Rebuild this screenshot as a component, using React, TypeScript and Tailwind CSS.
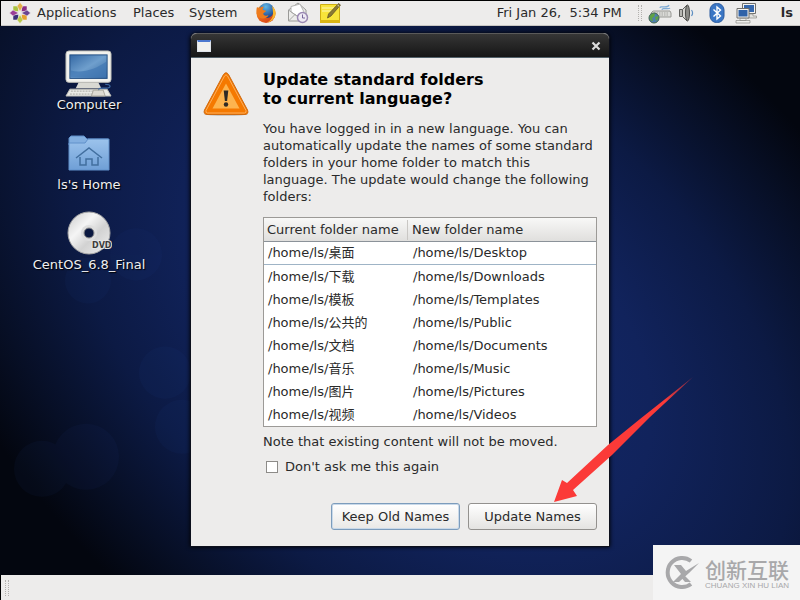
import type { ReactNode } from "react";

const folders = [
  ["/home/ls/桌面", "/home/ls/Desktop"],
  ["/home/ls/下载", "/home/ls/Downloads"],
  ["/home/ls/模板", "/home/ls/Templates"],
  ["/home/ls/公共的", "/home/ls/Public"],
  ["/home/ls/文档", "/home/ls/Documents"],
  ["/home/ls/音乐", "/home/ls/Music"],
  ["/home/ls/图片", "/home/ls/Pictures"],
  ["/home/ls/视频", "/home/ls/Videos"],
];

function CentosLogo() {
  return (
    <svg width="22" height="22" viewBox="0 0 22 22" aria-hidden="true">
      <g stroke="#f3f1ee" strokeWidth="0.5">
        <path d="M4 4h5.500v5.500H4z" fill="#a9c23f" />
        <path d="M12.500 4H18v5.500h-5.500z" fill="#8b2f86" />
        <path d="M4 12.500h5.500V18H4z" fill="#3b3079" />
        <path d="M12.500 12.500H18V18h-5.500z" fill="#e6a02e" />
        <path d="M11 0.500l3 3.500-3 5.500-3-5.500z" fill="#e3b04a" />
        <path d="M21.500 11l-3.500 3-5.500-3 5.500-3z" fill="#6b4592" />
        <path d="M11 21.500l3-3.500-3-5.500-3 5.500z" fill="#b9c94a" />
        <path d="M0.500 11l3.500-3 5.500 3-5.500 3z" fill="#9b3f97" />
      </g>
    </svg>
  );
}

function FirefoxIcon() {
  return (
    <svg width="22" height="22" viewBox="0 0 22 22" aria-hidden="true">
      <defs>
        <linearGradient id="fox" x1="0" y1="0" x2="1" y2="1">
          <stop offset="0" stopColor="#f7a21b" />
          <stop offset="0.500" stopColor="#e8601a" />
          <stop offset="1" stopColor="#c9341b" />
        </linearGradient>
        <radialGradient id="globe" cx="0.450" cy="0.250" r="0.800">
          <stop offset="0" stopColor="#5fb7e6" />
          <stop offset="1" stopColor="#173a86" />
        </radialGradient>
      </defs>
      <circle cx="11" cy="11.500" r="9.500" fill="url(#fox)" />
      <circle cx="11.500" cy="8.500" r="7.500" fill="url(#globe)" />
      <path d="M2 5c0 0 1.500 1 3 1 1-1 3-1.500 4-1-1.500 1-1.500 2-1 3l3 .7c0 1.500-2.500 1.800-2.800 3 .5 2 3 2.500 5.300 1.300-1 3-4.500 4.500-8 3C2 15 .5 10 2 5z" fill="#ee7b1c" />
      <path d="M17 4c3 2.500 4.300 6 3.500 9-1.200 4-4.500 7-8.500 7.500 4-2 6.300-5.500 6-9.500 0-2.500-.5-5-1-7z" fill="#f8b62d" />
    </svg>
  );
}

function MailIcon() {
  return (
    <svg width="22" height="22" viewBox="0 0 22 22" fill="none" aria-hidden="true">
      <path d="M1.500 8L11 1l8 7v11h-17.500z" fill="#ececea" stroke="#9a9a98" />
      <path d="M4 4.500l9-2.500 4 8-7 4-6-4z" fill="#fff" stroke="#b5b5b3" />
      <path d="M1.500 19l7-7M1.500 8l8.500 6" stroke="#a6a6a4" />
      <circle cx="15.500" cy="15.500" r="5" fill="#eeeaf3" stroke="#9a89b3" strokeWidth="1.500" />
      <path d="M15.500 12.500v3.500h2.500" stroke="#77679a" />
    </svg>
  );
}

function NoteIcon() {
  return (
    <svg width="23" height="22" viewBox="0 0 23 22" aria-hidden="true">
      <path d="M1.500 2.500h19v16h-19z" fill="#f8e43a" stroke="#cfae12" />
      <path d="M1 18h20v3H1z" fill="#d9b414" />
      <path d="M3 6h12M3 9h10" stroke="#fbf08a" strokeWidth="1.500" />
      <path d="M19.500 1.500l2 1.500-9.500 11-3.500 2 1-4z" fill="#8b7a35" stroke="#5c4d22" strokeWidth="0.700" />
      <path d="M18.500 3l1.800 1.400" stroke="#e5dfc8" />
    </svg>
  );
}

function KeyboardIcon() {
  return (
    <svg width="24" height="22" viewBox="0 0 24 22" fill="none" aria-hidden="true">
      <path d="M12 6c0-3 8 1 9-3" stroke="#7fabd4" strokeWidth="1.200" />
      <path d="M14 8c0-3 7 0 8-2" stroke="#7fabd4" strokeWidth="1.200" />
      <path d="M5 9h17l1 2v4H3v-4z" fill="#dcdcd9" stroke="#989894" />
      <path d="M6 11h15M6 13h15" stroke="#a5a5a1" strokeDasharray="1.500 1" />
      <circle cx="6" cy="16" r="5" fill="#4f7fae" stroke="#41644a" />
      <path d="M2 14c1-2 3-3 5-2l-1 3-2 1 1 3c-2 0-4-2-3-5z" fill="#5fa244" />
      <path d="M7 15l3.500-1c0 2-1 4-2.500 5z" fill="#5fa244" />
    </svg>
  );
}

function SpeakerIcon() {
  return (
    <svg width="17" height="20" viewBox="0 0 17 20" fill="none" aria-hidden="true">
      <path d="M1.500 6.500h3v7h-3z" fill="#b7b7b3" stroke="#5d5d5a" />
      <path d="M4.500 6.500L9 2v16l-4.500-4.500z" fill="#d3d3cf" stroke="#5d5d5a" />
      <ellipse cx="9.500" cy="10" rx="2" ry="8" fill="#8c8c88" stroke="#4d4d4a" />
      <path d="M13.500 7c1.300 1.800 1.300 4.200 0 6" stroke="#5f8fc2" strokeWidth="1.200" />
    </svg>
  );
}

function BluetoothIcon() {
  return (
    <svg width="16" height="20" viewBox="0 0 16 20" fill="none" aria-hidden="true">
      <rect x="1" y="0.500" width="14" height="19" rx="6.500" fill="#3a76c4" stroke="#2a5a9f" />
      <path d="M4.500 6.500l7 6.500L8 16V4l3.500 3-7 6.500" stroke="#fff" strokeWidth="1.400" />
    </svg>
  );
}

function NetworkIcon() {
  return (
    <svg width="22" height="22" viewBox="0 0 22 22" aria-hidden="true">
      <path d="M7.500 1.500h13v10h-13z" fill="#f4f4f2" stroke="#6f6f6c" />
      <path d="M9 3h10v7H9z" fill="#3668ad" />
      <path d="M12 12h6v2h3.500v2H12z" fill="#e2e2df" stroke="#8c8c88" strokeWidth="0.700" />
      <path d="M2 6.500h12v9.500H2z" fill="#f4f4f2" stroke="#6f6f6c" />
      <path d="M3.500 8h9v6.500h-9z" fill="#2f62a8" />
      <path d="M5 16.500h6v2H5zM1 18.500h14v2.500H1z" fill="#f0f0ed" stroke="#8c8c88" strokeWidth="0.700" />
    </svg>
  );
}

function ComputerIcon() {
  return (
    <svg width="47" height="47" viewBox="0 0 48 48" aria-hidden="true">
      <defs>
        <linearGradient id="screen" x1="0" y1="0" x2="1" y2="1">
          <stop offset="0" stopColor="#3468a4" />
          <stop offset="0.500" stopColor="#6f9fcd" />
          <stop offset="1" stopColor="#33669f" />
        </linearGradient>
      </defs>
      <path d="M14 33h20l3 6H11z" fill="#d9d9d3" />
      <rect x="1" y="1" width="46" height="32" rx="3" fill="#f2f2ee" stroke="#bdbdb6" />
      <rect x="5" y="5" width="38" height="24" fill="url(#screen)" stroke="#234f84" />
      <path d="M6 21c13 3 26-2 36-9v16H6z" fill="#4177b3" opacity="0.700" />
      <path d="M5 40h38l4 7H1z" fill="#ebebe6" stroke="#c0c0b8" />
      <path d="M6 42h24M5 45h26" stroke="#a9a9a2" strokeDasharray="2 1" />
      <path d="M34 42c0-4 4-3 8-3 6 0 5-4-1-4" fill="none" stroke="#3e6aa5" strokeWidth="1.200" />
      <path d="M29 41h10l2 6H27z" fill="#dedbd2" stroke="#aaa79c" />
    </svg>
  );
}

function HomeIcon() {
  return (
    <svg width="42" height="36" viewBox="0 0 42 36" aria-hidden="true">
      <defs>
        <linearGradient id="folder" x1="0" y1="0" x2="0" y2="1">
          <stop offset="0" stopColor="#9cc3ec" />
          <stop offset="1" stopColor="#6f9fd6" />
        </linearGradient>
      </defs>
      <path d="M1 8V3l2-2h13l3 3h21v6H1z" fill="#83afe0" stroke="#5c8cc7" />
      <path d="M1 8h16l3-4h21v31H1z" fill="url(#folder)" stroke="#6090ca" />
      <path d="M8 23l13-10 13 10M12 22v8h6v-6h6v6h6v-8" fill="none" stroke="#426f9f" strokeWidth="1.500" />
    </svg>
  );
}

function DiscIcon() {
  return (
    <svg width="46" height="44" viewBox="0 0 46 44" aria-hidden="true">
      <defs>
        <linearGradient id="disc" x1="0" y1="0" x2="1" y2="1">
          <stop offset="0" stopColor="#c9c9c9" />
          <stop offset="0.350" stopColor="#f5f5f5" />
          <stop offset="0.600" stopColor="#d2d2d2" />
          <stop offset="1" stopColor="#f0f0f0" />
        </linearGradient>
      </defs>
      <circle cx="23" cy="22" r="21" fill="url(#disc)" stroke="#a5a5a5" />
      <circle cx="23" cy="22" r="8" fill="#dedede" />
      <circle cx="23" cy="22" r="5" fill="#0b1840" stroke="#8f8f8f" />
      <text x="26" y="37" fontSize="8" fontWeight="bold" fill="#3c3c3c" stroke="#e4e4e4" strokeWidth="2" paintOrder="stroke" className="font-['DejaVu_Sans',sans-serif]">DVD</text>
    </svg>
  );
}

function WarningIcon() {
  return (
    <svg width="46" height="46" viewBox="0 0 46 46" className="shrink-0" aria-hidden="true">
      <ellipse cx="23" cy="43" rx="22" ry="2" fill="#c9c7c4" />
      <path d="M20.500 3.500Q23 0 25.500 3.500L44.500 39Q46 43 42 43.500H4Q0 43 1.500 39z" fill="#f57900" stroke="#d06a10" />
      <path d="M21.500 5Q23 2.500 24.500 5L43 39.500Q43.500 42 41.500 42H4.500Q2.500 42 3 39.500z" fill="none" stroke="#fcaf5e" />
      <path d="M23 12.500L36.500 37.500h-27z" fill="#fdb44e" />
      <path d="M20.700 19.500h4.600l-1.200 10.500h-2.200z" fill="#2e2a25" />
      <circle cx="23" cy="33.500" r="2.200" fill="#2e2a25" />
    </svg>
  );
}

function DesktopItem({ icon, label }: { icon: ReactNode; label: string }) {
  return (
    <button type="button" className="flex flex-col items-center">
      <span className="flex h-12 items-center justify-center">{icon}</span>
      <span className="leading-4 whitespace-nowrap text-[#f0f0f0] [text-shadow:1px_1px_1px_#000]">{label}</span>
    </button>
  );
}

function Wallpaper() {
  return (
    <svg className="absolute inset-0 size-full" viewBox="0 0 800 548" preserveAspectRatio="none" aria-hidden="true">
      <defs>
        <radialGradient id="sky" gradientUnits="userSpaceOnUse" cx="0" cy="0" r="1" gradientTransform="translate(430 300) rotate(40) scale(640 400)">
          <stop offset="0" stopColor="#132a70" />
          <stop offset="0.400" stopColor="#11235c" />
          <stop offset="0.650" stopColor="#0c1a44" />
          <stop offset="0.850" stopColor="#070f26" />
          <stop offset="1" stopColor="#03060f" />
        </radialGradient>
      </defs>
      <rect width="800" height="548" fill="url(#sky)" />
      <g fill="#2f55b5" opacity="0.050">
        <circle cx="86" cy="430" r="33" />
        <circle cx="42" cy="442" r="28" />
        <circle cx="136" cy="228" r="26" />
        <circle cx="88" cy="254" r="23" />
        <circle cx="165" cy="346" r="26" />
        <circle cx="182" cy="400" r="27" />
      </g>
    </svg>
  );
}

function TopPanel() {
  return (
    <header className="flex h-[26px] items-center border-t border-b border-t-black border-b-[#c9c7c4] bg-[#edeceb] pr-[7px] pl-2">
      <CentosLogo />
      <nav className="ml-1.5 flex items-center gap-3.5" aria-label="Main menu">
        <button type="button" className="w-[82px] text-left">Applications</button>
        <button type="button" className="w-[42px] text-left">Places</button>
        <button type="button" className="w-[50px] text-left">System</button>
      </nav>
      <div className="ml-4 flex items-center gap-2.5">
        <button type="button" aria-label="Web browser"><FirefoxIcon /></button>
        <button type="button" aria-label="Mail"><MailIcon /></button>
        <button type="button" aria-label="Notes"><NoteIcon /></button>
      </div>
      <div className="ml-auto flex items-center">
        <time className="whitespace-pre">Fri Jan 26,  5:34 PM</time>
        <span className="mr-1.5 ml-4 h-4 border-x border-dotted border-[#b3b1ae] px-px" />
        <button type="button" aria-label="Keyboard"><KeyboardIcon /></button>
        <button type="button" aria-label="Volume" className="ml-1.5"><SpeakerIcon /></button>
        <button type="button" aria-label="Bluetooth" className="ml-3.5"><BluetoothIcon /></button>
        <button type="button" aria-label="Network" className="ml-2.5"><NetworkIcon /></button>
        <button type="button" className="ml-6 font-bold">ls</button>
      </div>
    </header>
  );
}

function Dialog() {
  return (
    <section
      aria-labelledby="dialog-title"
      className="relative mt-[7px] self-start rounded-t-md border border-t-0 border-[#0c0f1c] bg-[#edeceb] shadow-[0_0_4px_#000]"
    >
      <div className="flex h-[25px] items-center justify-between rounded-t-md border-t border-b border-t-[#5a5a5a] border-b-[#52616a] bg-linear-to-b from-[#363636] to-[#161616] pr-[7px] pl-1.5">
        <span className="h-3 w-3.5 border border-t-2 border-[#dfe3ea] border-t-[#4c78cf] bg-[#f0f0ee]" />
        <button type="button" aria-label="Close" className="flex size-3 items-center justify-center">
          <svg width="10" height="10" viewBox="0 0 10 10" aria-hidden="true">
            <path d="M1.500 1.500l7 7M8.500 1.500l-7 7" stroke="#dcdcdc" strokeWidth="2.200" />
          </svg>
        </button>
      </div>
      <div className="flex gap-3.5 px-3 pt-3 pb-4">
        <div className="pt-px">
          <WarningIcon />
        </div>
        <div className="min-w-0 grow">
          <h1 id="dialog-title" className="text-[16px] leading-[19px] font-bold text-black">
            Update standard folders
            <br />
            to current language?
          </h1>
          <p className="mt-3 leading-[17px] whitespace-nowrap">
            You have logged in in a new language. You can
            <br />
            automatically update the names of some standard
            <br />
            folders in your home folder to match this
            <br />
            language. The update would change the following
            <br />
            folders:
          </p>
          <table className="mt-3 w-full table-fixed border-separate border-spacing-0 border border-[#9c9a97] bg-white">
            <thead>
              <tr className="h-6 bg-linear-to-b from-[#f8f8f7] to-[#dfdedc] text-left">
                <th scope="col" className="w-[144px] border-b border-[#8b9299] p-0 font-normal">
                  <span className="block border-r border-[#c9c7c4] pl-[3px] leading-5 whitespace-nowrap">Current folder name</span>
                </th>
                <th scope="col" className="border-b border-[#8b9299] p-0 pl-1 font-normal">New folder name</th>
              </tr>
            </thead>
            <tbody>
              {folders.map(([current, next], i) => (
                <tr key={current} className={i === 0 ? "h-[23px] [&>td]:border-b [&>td]:border-[#9fb4c6]" : "h-[23px]"}>
                  <td className="p-0 pl-1 leading-4 whitespace-nowrap">{current}</td>
                  <td className="p-0 pl-[5px] leading-4">{next}</td>
                </tr>
              ))}
            </tbody>
          </table>
          <p className="mt-1.5 leading-[17px]">Note that existing content will not be moved.</p>
          <label className="mt-2 flex items-center gap-[7px] pl-[3px] leading-[17px]">
            <input type="checkbox" className="size-3 appearance-none border border-[#8d8b88] bg-white checked:bg-[#5b8fc9]" />
            Don&apos;t ask me this again
          </label>
          <div className="mt-7 flex justify-end gap-2">
            <button type="button" className="h-[27px] w-[129px] rounded-[3px] border border-[#7c9cbc] bg-linear-to-b from-white to-[#e9e8e6] whitespace-nowrap shadow-[inset_0_0_0_1px_#c9d9e9]">
              Keep Old Names
            </button>
            <button type="button" className="h-[27px] w-[129px] rounded-[3px] border border-[#93918e] bg-linear-to-b from-white to-[#e4e3e1] whitespace-nowrap">
              Update Names
            </button>
          </div>
        </div>
      </div>
      <svg className="pointer-events-none absolute top-[332px] left-[349px]" width="160" height="145" viewBox="0 0 160 145" aria-hidden="true">
        <defs>
          <linearGradient id="arrow" x1="0" y1="1" x2="1" y2="0">
            <stop offset="0.800" stopColor="#fb3a38" />
            <stop offset="1" stopColor="#fb3a38" stopOpacity="0.400" />
          </linearGradient>
        </defs>
        <path d="M14 137L22 115L27 118L68 80L100 54L153 12L110 52L72 90L33 125L37 131z" fill="url(#arrow)" />
      </svg>
    </section>
  );
}

function Brand() {
  return (
    <aside className="absolute right-0 bottom-0 flex h-[55px] w-[147px] items-center gap-1 bg-[#f4f4f4] pl-2.5 text-[#a8a8aa]">
      <svg width="38" height="36" viewBox="0 0 38 36" fill="none" className="shrink-0" aria-hidden="true">
        <path d="M28 6A14.500 14.500 0 1 0 28 29" stroke="currentColor" strokeWidth="4" />
        <path d="M11 10h7l5 6 13-8-10 10-10 9h-6l8-8z" fill="currentColor" />
        <path d="M19 18l9 9h-6l-5-6z" fill="currentColor" />
      </svg>
      <div className="flex flex-col whitespace-nowrap">
        <span className="font-['Noto_Sans_CJK_SC',sans-serif] text-[21px] leading-[26px] font-medium">创新互联</span>
        <span className="font-['Liberation_Sans',sans-serif] text-[8px] leading-[8px]">CHUANG XIN HU LIAN</span>
      </div>
    </aside>
  );
}

export default function App() {
  return (
    <div className="relative flex min-h-screen flex-col border-l border-black bg-black font-['DejaVu_Sans','Noto_Sans_CJK_SC',sans-serif] text-[13px] text-[#2a2a2a]">
      <TopPanel />
      <main className="relative -ml-px grid grow grid-cols-[1fr_420px_1fr]">
        <Wallpaper />
        <div className="relative flex flex-col items-center gap-4 pt-[23px] pr-3">
          <DesktopItem icon={<ComputerIcon />} label="Computer" />
          <DesktopItem icon={<HomeIcon />} label="ls's Home" />
          <DesktopItem icon={<DiscIcon />} label="CentOS_6.8_Final" />
        </div>
        <Dialog />
      </main>
      <footer className="flex h-[25px] items-center bg-[#edeceb] pl-1">
        <span className="h-4 border-x border-dotted border-[#b3b1ae] px-px" />
      </footer>
      <Brand />
    </div>
  );
}
